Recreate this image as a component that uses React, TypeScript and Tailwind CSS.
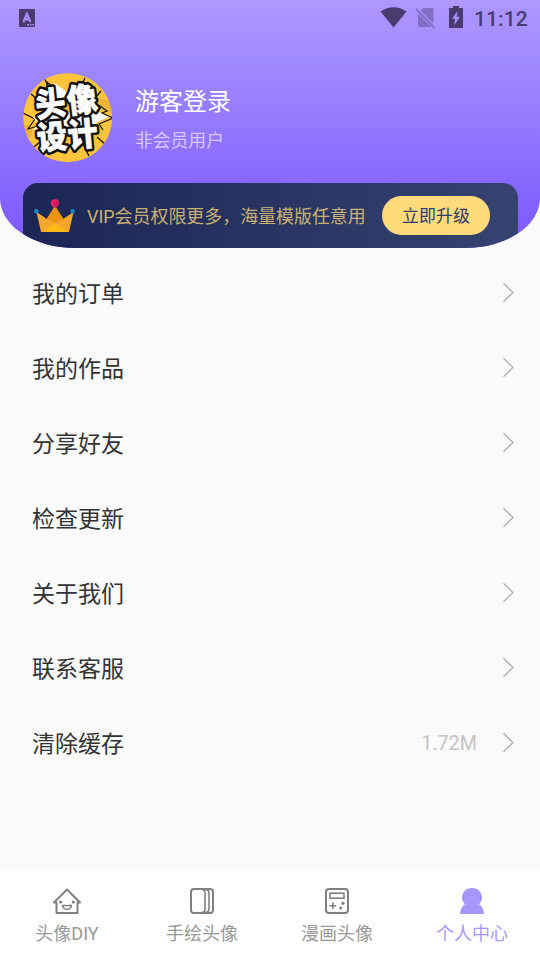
import React from 'react';

const menu = ['我的订单', '我的作品', '分享好友', '检查更新', '关于我们', '联系客服', '清除缓存'];

function StatusBar() {
  return (
    <div className="flex h-9 items-center justify-between pl-[19px] pr-3 text-[#483b6f]">
      <svg width="16" height="18" viewBox="0 0 16 18">
        <rect width="16" height="18" rx="1" fill="currentColor" />
        <path d="M4.4 13L7.9 4.9L11.4 13M5.5 10.4H10.3" fill="none" stroke="#a793fe" strokeWidth="2.1" />
        <path d="M8 15h2v1.5H8zM10.8 15h1.6v1.5h-1.6zM13.2 15h1.6v1.5h-1.6z" fill="#a793fe" />
      </svg>
      <div className="flex items-center">
        <svg width="94" height="26" viewBox="0 0 94 26">
          <path d="M0.5 6.5C8.5 0.7 18.5 0.7 26.5 6.5L13.5 22.5Z" fill="currentColor" />
          <g opacity="0.4">
            <path d="M43.5 3H53.5V18.8L40.5 5.5ZM38 8.5L51 22H40Q38 22 38 20.5Z" fill="currentColor" />
            <path d="M36 4L54.5 23" stroke="currentColor" strokeWidth="1.8" />
          </g>
          <path d="M73 1H79V3H83V23H69V3H73Z" fill="currentColor" />
          <path d="M77.5 6L72.2 13.8H75.2L74 20.5L80 11.8H76.7Z" fill="#a793fe" />
        </svg>
        <span className="w-[54px] whitespace-nowrap pt-0.5 text-[21px] font-medium leading-6 tracking-[0.1px]">11:12</span>
      </div>
    </div>
  );
}

function Avatar() {
  return (
    <svg width="90" height="90" viewBox="0 0 90 90">
      <defs>
        <clipPath id="avatar">
          <circle cx="44.7" cy="44.7" r="44.5" />
        </clipPath>
        <pattern id="dots" width="2" height="2" patternUnits="userSpaceOnUse">
          <circle cx="1" cy="1" r="0.6" fill="#a97820" />
        </pattern>
      </defs>
      <g clipPath="url(#avatar)">
        <rect width="90" height="90" fill="#ffc43c" />
        <path d="M77 26L88 28V40L77 36ZM0 50L9 56L8 65L0 60Z" fill="url(#dots)" />
        <g stroke="#171512" strokeWidth="1.4">
          <path d="M21 5L28 18M8 21L15 27M62 5L58 13M60 71L66 83M74 64L83 72M7 77L17 69M78 18L73 24" />
        </g>
        <path d="M0 40L12 46L5 56L15 53M24 18L24 9L34 17M77 33L84 38L79 40L90 45L76 51L80 57" fill="none" stroke="#171512" strokeWidth="1.2" />
        <path d="M31 10L43 18V25H31ZM10 44L18 42L43 39L75 39L86 44L74 49L72 54L43 54L10 57L15 51Z" fill="white" />
        <g className="font-['Noto_Sans_CJK_SC',sans-serif] text-[30px] font-black" strokeLinejoin="round">
          <g fill="#111" stroke="#111" strokeWidth="5.5">
            <text transform="translate(14 44.5) rotate(-7) scale(1 1.1)" textLength="62">头像</text>
            <text transform="translate(15 77) rotate(-5) scale(1 1.08)" textLength="61">设计</text>
          </g>
          <g fill="white" stroke="white" strokeWidth="0.7">
            <text transform="translate(14 44.5) rotate(-7) scale(1 1.1)" textLength="62">头像</text>
            <text transform="translate(15 77) rotate(-5) scale(1 1.08)" textLength="61">设计</text>
          </g>
        </g>
      </g>
    </svg>
  );
}

function Crown() {
  return (
    <svg className="shrink-0" width="42" height="34" viewBox="0 0 42 34">
      <path d="M2.5 13L13 20L21 7L29 20L39.5 13L35 33H7Z" fill="#f6a52d" />
      <path d="M21 7L29.5 20L21 24.5L12.5 20Z" fill="#ed9411" />
      <path d="M21 24.5L34.5 33H7.5Z" fill="#fab915" />
      <circle cx="2.3" cy="12.2" r="2.2" fill="#1687c6" />
      <circle cx="38.7" cy="12.2" r="2.2" fill="#1687c6" />
      <circle cx="21" cy="4.3" r="4.2" fill="#e91e63" />
      <path d="M21 .1a4.2 4.2 0 0 1 0 8.4z" fill="#c81d60" />
    </svg>
  );
}

function NavIcon({ index }: { index: number }) {
  return (
    <svg width="30" height="28" viewBox="0 0 30 28" fill="none" stroke="#808080" strokeWidth="2" strokeLinejoin="round" strokeLinecap="round">
      {index === 0 && (
        <>
          <path d="M4.5 15.5V26H25.5V15.5H28L15 2.5L2 15.5Z" />
          <circle cx="8.7" cy="15" r="1.6" fill="#808080" stroke="none" />
          <circle cx="21.3" cy="15" r="1.6" fill="#808080" stroke="none" />
          <path d="M10.5 18.5H19.5Q19 22.3 15 22.3Q11 22.3 10.5 18.5Z" strokeWidth="1.6" />
        </>
      )}
      {index === 1 && (
        <>
          <rect x="4" y="2" width="22" height="24" rx="3" />
          <path d="M16 3Q18 3 18 6V22Q18 25 16 25M19.5 3Q22 3 22 6V22Q22 25 19.5 25" strokeWidth="1.6" />
        </>
      )}
      {index === 2 && (
        <>
          <rect x="4" y="2" width="22" height="24" rx="3" />
          <rect x="8" y="6.2" width="14" height="5" strokeWidth="1.6" strokeLinejoin="miter" />
          <path d="M10.8 16V21.5M8 18.8H13.5" strokeWidth="1.6" />
          <circle cx="21" cy="16.3" r="1.6" fill="#808080" stroke="none" />
          <circle cx="18.8" cy="21" r="1.6" fill="#808080" stroke="none" />
        </>
      )}
      {index === 3 && (
        <path d="M8 17.3C6 15.5 5 13.5 5 10.8C5 5 9 1 15 1S25 5 25 10.8C25 13.5 24 15.5 22 17.3Q26.5 20 27 27H3Q3.5 20 8 17.3Z" fill="#aa96ff" stroke="none" />
      )}
    </svg>
  );
}

export default function App() {
  return (
    <div className="flex h-[960px] w-[540px] flex-col overflow-hidden bg-[#fafafa] font-[Roboto,'Noto_Sans_CJK_SC',sans-serif]">
      <header className="flex h-[248px] shrink-0 flex-col overflow-hidden rounded-b-[75px_50px] bg-linear-to-b from-[#ac98ff] to-[#7c55ff]">
        <StatusBar />
        <div className="flex h-[147px] items-start gap-[22px] pl-[23px] pt-[37px]">
          <Avatar />
          <div className="pt-[11px]">
            <div className="text-2xl leading-9 text-white">游客登录</div>
            <div className="mt-[7px] text-[17.8px] leading-7 text-[#d9c4ff]">非会员用户</div>
          </div>
        </div>
        <div className="ml-[23px] mr-[22px] flex h-[65px] items-center rounded-t-[15px] bg-linear-to-r from-[#1b2654] to-[#36426f] pl-[11px]">
          <Crown />
          <span className="ml-[11px] w-[295px] whitespace-nowrap pt-[3px] text-[17.95px] text-[#c9b171]">VIP会员权限更多，海量模版任意用</span>
          <button className="h-[39px] w-[108px] rounded-full bg-[#ffdb7b] pt-[3px] text-[17px] text-[#303b6b]">立即升级</button>
        </div>
      </header>
      <main className="flex-1 pt-2">
        {menu.map((label) => (
          <div key={label} className="flex h-[75px] items-center pl-8 pr-[26px] text-[23px] text-[#333]">
            <span className="flex-1 pt-1">{label}</span>
            {label === '清除缓存' && <span className="mr-[25px] text-[19.8px] text-[#c4c4c4]">1.72M</span>}
            <svg width="12" height="20" viewBox="0 0 12 20" className="mb-[3px]" fill="none" stroke="#aaa" strokeWidth="1.2">
              <path d="M1.5 1.2L11 10.5L1.5 19.8" />
            </svg>
          </div>
        ))}
      </main>
      <nav className="grid h-[90px] shrink-0 grid-cols-4 bg-white">
        {['头像DIY', '手绘头像', '漫画头像', '个人中心'].map((label, index) => (
          <div key={label} className={index === 3 ? 'flex flex-col items-center pr-px pt-[17px] text-[#aa96ff]' : 'flex flex-col items-center pr-px pt-[17px] text-[#999]'}>
            <NavIcon index={index} />
            <span className="mt-[5px] text-[18px] leading-7">{label}</span>
          </div>
        ))}
      </nav>
    </div>
  );
}
